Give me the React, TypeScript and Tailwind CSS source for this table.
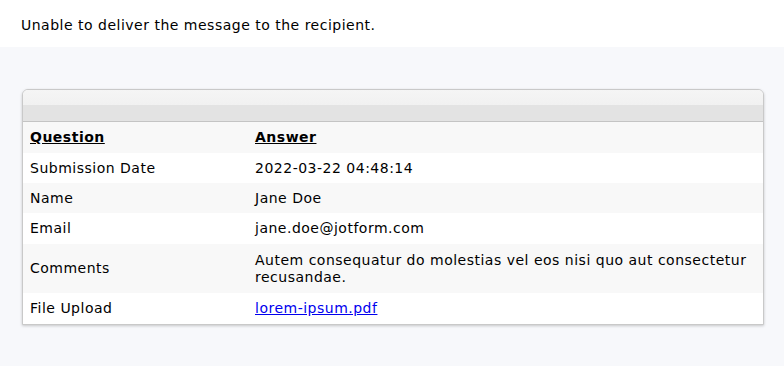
export default function App() {
  const rows: { q: string; a: React.ReactNode; alt: boolean; h: string }[] = [
    { q: 'Submission Date', a: '2022-03-22 04:48:14', alt: false, h: 'h-[30px]' },
    { q: 'Name', a: 'Jane Doe', alt: true, h: 'h-[30px]' },
    { q: 'Email', a: 'jane.doe@jotform.com', alt: false, h: 'h-[31px]' },
    {
      q: 'Comments',
      a: 'Autem consequatur do molestias vel eos nisi quo aut consectetur recusandae.',
      alt: true,
      h: 'h-[49px]',
    },
    {
      q: 'File Upload',
      a: (
        <a href="#" className="text-[#0000ee] underline">
          lorem-ipsum.pdf
        </a>
      ),
      alt: false,
      h: 'h-[31px]',
    },
  ];

  return (
    <div className="min-h-[366px] bg-[#f7f8fb] font-['DejaVu_Sans',Verdana,sans-serif] text-[14px] tracking-[0.5px] text-black">
      {/* Notice */}
      <div className="h-[47px] bg-white px-[21px] pt-[17px] leading-[17px]">
        Unable to deliver the message to the recipient.
      </div>

      {/* Submission table */}
      <div className="pl-[22px] pr-[20px] pt-[42px] pb-[40px]">
        <div className="overflow-hidden rounded-t-[6px] border border-[#c9c9c9] bg-white shadow-[0_1px_3px_rgba(0,0,0,0.2)]">
          <div className="h-[32px] border-b border-[#c4c4c4] bg-[linear-gradient(#f5f5f5_0%,#f1f1f1_48%,#e3e3e3_50%,#e3e3e3_100%)]" />
          <table className="w-full border-collapse leading-[17px]">
            <tbody>
              <tr className="bg-[#f8f8f8] font-bold">
                <td className="h-[31px] w-[224px] py-[6px] pl-[7px] align-middle">
                  <span className="underline">Question</span>
                </td>
                <td className="py-[6px] pl-[8px] align-middle">
                  <span className="underline">Answer</span>
                </td>
              </tr>
              {rows.map((r) => (
                <tr key={r.q} className={r.alt ? 'bg-[#f8f8f8]' : 'bg-white'}>
                  <td className={`${r.h} py-[6px] pl-[7px] align-middle`}>{r.q}</td>
                  <td className="py-[6px] pl-[8px] pr-[12px] align-middle">{r.a}</td>
                </tr>
              ))}
            </tbody>
          </table>
        </div>
      </div>
    </div>
  );
}
